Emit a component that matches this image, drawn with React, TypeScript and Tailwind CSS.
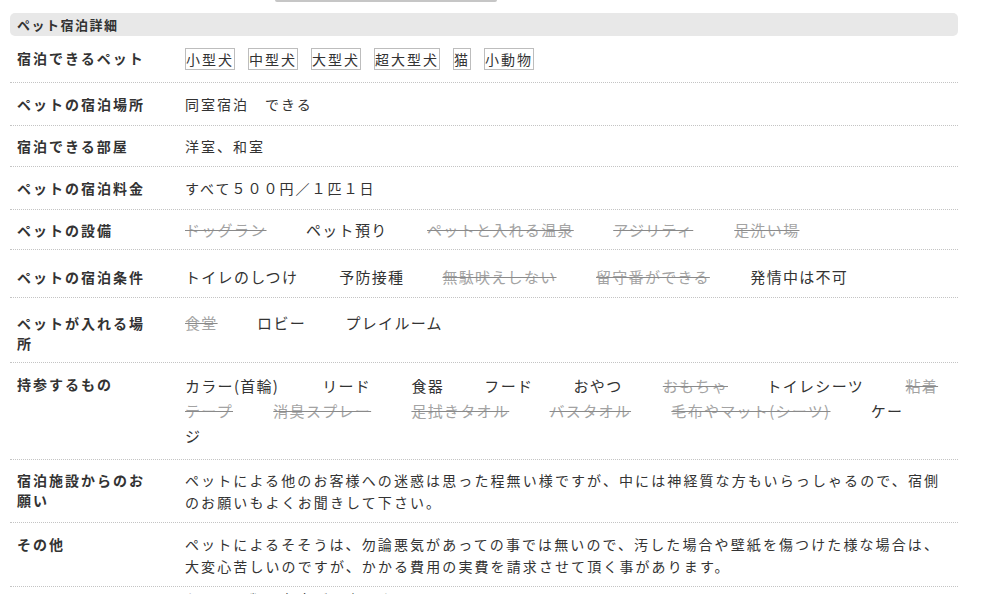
import React from "react";

type Item = { t: React.ReactNode; off?: boolean; extra?: string };

const font = { fontFamily: '"Noto Sans CJK JP", "Noto Sans", sans-serif' };

function Items({ items, gap = "mr-[39.5px]" }: { items: Item[]; gap?: string }) {
  return (
    <>
      {items.map((it, i) => (
        <span
          key={i}
          className={
            (it.extra || gap) +
            " " +
            (it.off ? "text-[#a3a3a3] line-through decoration-[#8a8a8a]" : "text-[#333]")
          }
        >
          {it.t}
        </span>
      ))}
    </>
  );
}

function Row({
  label,
  children,
  rowCls,
  labelCls = "pt-[11px]",
  contentCls,
}: {
  label: string;
  children: React.ReactNode;
  rowCls?: string;
  labelCls?: string;
  contentCls: string;
}) {
  return (
    <div className={"flex items-start border-b border-dotted border-[#c4c4c4] " + (rowCls || "")}>
      <div className={"w-[175px] shrink-0 pl-[7px] " + labelCls}>
        <div className="w-[136px] text-[14px] leading-[20px] font-bold tracking-[2px] text-[#333]">
          {label}
        </div>
      </div>
      <div className={"flex-1 pr-[8px] " + contentCls}>{children}</div>
    </div>
  );
}

export default function App() {
  const tags = ["小型犬", "中型犬", "大型犬", "超大型犬", "猫", "小動物"];
  return (
    <div className="w-[985px] h-[594px] overflow-hidden bg-white" style={font}>
      <div className="ml-[275px] w-[222px] h-[2px] rounded-b-[3px] border-b-2 border-x border-[#c6c6c6]" />
      <div className="ml-[10px] w-[948px]">
        <div className="mt-[11px] h-[23px] rounded-[5px] bg-[#e8e8e8] pl-[7px] text-[13px] leading-[23px] font-bold tracking-[1.5px] text-[#333]">
          ペット宿泊詳細
        </div>

        <Row label="宿泊できるペット" labelCls="pt-[12px]" contentCls="pt-[12px] pb-[12px] flex">
          {tags.map((t) => (
            <span
              key={t}
              className="mr-[13px] border border-[#bdbdbd] text-[14px] leading-[20px] tracking-[2px] text-[#333]"
            >
              {t}
            </span>
          ))}
        </Row>

        <Row label="ペットの宿泊場所" contentCls="py-[11px] text-[14px] leading-[20px] tracking-[2px] text-[#333]">
          同室宿泊　できる
        </Row>

        <Row label="宿泊できる部屋" labelCls="pt-[10px]" contentCls="py-[10px] text-[14px] leading-[20px] tracking-[2px] text-[#333]">
          洋室、和室
        </Row>

        <Row label="ペットの宿泊料金" contentCls="py-[11px] text-[14px] leading-[20px] tracking-[2px] text-[#333]">
          すべて５００円／１匹１日
        </Row>

        <Row label="ペットの設備" labelCls="pt-[10px]" contentCls="pt-[10px] pb-[9px] text-[15px] leading-[20px] tracking-[1.3px]">
          <Items
            items={[
              { t: "ドッグラン", off: true },
              { t: "ペット預り" },
              { t: "ペットと入れる温泉", off: true },
              { t: "アジリティ", off: true, extra: "mr-[41px]" },
              { t: "足洗い場", off: true },
            ]}
          />
        </Row>

        <Row label="ペットの宿泊条件" labelCls="pt-[17px]" contentCls="pt-[17px] pb-[10px] text-[15px] leading-[20px] tracking-[1.3px]">
          <Items
            items={[
              { t: "トイレのしつけ", extra: "mr-[41px]" },
              { t: "予防接種", extra: "mr-[38px]" },
              { t: "無駄吠えしない", off: true },
              { t: "留守番ができる", off: true, extra: "mr-[40.5px]" },
              { t: "発情中は不可" },
            ]}
          />
        </Row>

        <Row label="ペットが入れる場所" labelCls="pt-[15px] pb-[9px]" contentCls="pt-[15px] text-[15px] leading-[20px] tracking-[1.3px]">
          <Items items={[{ t: "食堂", off: true }, { t: "ロビー" }, { t: "プレイルーム" }]} />
        </Row>

        <Row label="持参するもの" contentCls="pt-[10px] pb-[11px] text-[15px] leading-[25px] tracking-[1.3px]">
          <Items
            gap="mr-[40.3px]"
            items={[
              { t: "カラー(首輪)", extra: "mr-[43px]" },
              { t: "リード" },
              { t: "食器" },
              { t: "フード" },
              { t: "おやつ" },
              { t: "おもちゃ", off: true, extra: "mr-[38.5px]" },
              { t: "トイレシーツ", extra: "mr-[41.5px]" },
              {
                t: (
                  <>
                    粘着
                    <br />
                    テープ
                  </>
                ),
                off: true,
              },
              { t: "消臭スプレー", off: true },
              { t: "足拭きタオル", off: true },
              { t: "バスタオル", off: true },
              { t: "毛布やマット(シーツ)", off: true },
              {
                t: (
                  <>
                    ケー
                    <br />ジ
                  </>
                ),
              },
            ]}
          />
        </Row>

        <Row label="宿泊施設からのお願い" labelCls="pt-[10px]" contentCls="pt-[9px] pb-[9px] text-[14px] leading-[22px] tracking-[2.1px] text-[#333]">
          ペットによる他のお客様への迷惑は思った程無い様ですが、中には神経質な方もいらっしゃるので、宿側のお願いもよくお聞きして下さい。
        </Row>

        <Row label="その他" contentCls="pt-[10px] pb-[9px] text-[14px] leading-[22px] tracking-[2.1px] text-[#333]">
          ペットによるそそうは、勿論悪気があっての事では無いので、汚した場合や壁紙を傷つけた様な場合は、大変心苦しいのですが、かかる費用の実費を請求させて頂く事があります。
        </Row>

        <div className="flex">
          <div className="w-[175px] shrink-0" />
          <div className="flex-1 pt-[1px] text-[14px] leading-[22px] tracking-[2.1px] text-[#333]">
            おくすり類は各自ご用意下さい。
          </div>
        </div>
      </div>
    </div>
  );
}
